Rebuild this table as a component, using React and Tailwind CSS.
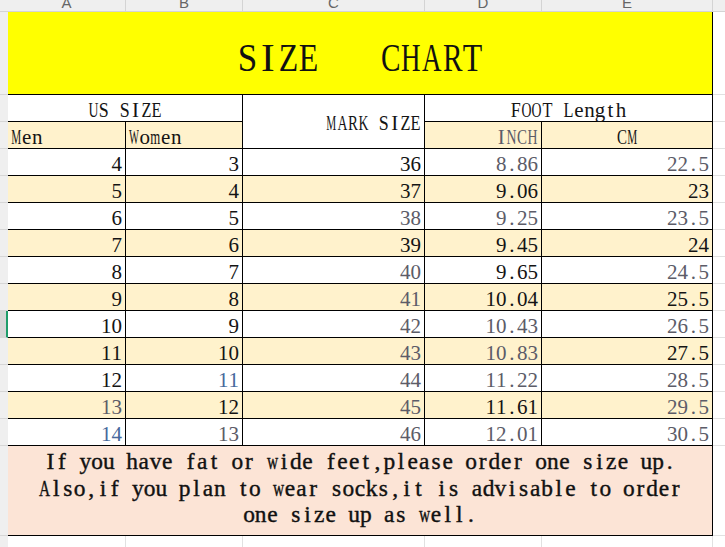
import React from 'react';

// Liberation Serif advance widths (per 1000 em) for glyphs wider than a half-width cell
const GW = {
  A: 722, B: 667, C: 667, D: 722, E: 611, F: 556, G: 722, H: 722, K: 722, L: 611,
  M: 889, N: 722, O: 722, P: 556, R: 667, S: 556, T: 611, U: 722, V: 722, W: 944, Z: 611,
  m: 778, w: 722,
};

// SimSun-like fixed pitch: every glyph sits in a half-em cell
function Mono({ text }) {
  return (
    <span className="whitespace-nowrap">
      {text.split('').map((ch, i) => {
        const w = (GW[ch] || 500) / 1000;
        const s = w > 0.5 ? 0.475 / w : 1;
        return (
          <span key={i} className="inline-flex w-[0.5em] justify-center">
            <span
              className="inline-block whitespace-pre"
              style={s < 1 ? { transform: `scaleX(${s})` } : undefined}
            >
              {ch}
            </span>
          </span>
        );
      })}
    </span>
  );
}

const letters = [
  ['A', 'w-[118px]'],
  ['B', 'w-[117px]'],
  ['C', 'w-[182px]'],
  ['D', 'w-[117px]'],
  ['E', 'w-[171px]'],
];

const tone = {
  d: 'text-[#141414]',
  g: 'text-[#5c5c68]',
  b: 'text-[#46689c]',
};

const data = [
  [['4', '3', '36', '8.86', '22.5'], 'dddgg'],
  [['5', '4', '37', '9.06', '23'], 'ddddd'],
  [['6', '5', '38', '9.25', '23.5'], 'ddggg'],
  [['7', '6', '39', '9.45', '24'], 'ddddd'],
  [['8', '7', '40', '9.65', '24.5'], 'ddgdg'],
  [['9', '8', '41', '10.04', '25.5'], 'ddgdd'],
  [['10', '9', '42', '10.43', '26.5'], 'ddggg'],
  [['11', '10', '43', '10.83', '27.5'], 'ddggd'],
  [['12', '11', '44', '11.22', '28.5'], 'dbggg'],
  [['13', '12', '45', '11.61', '29.5'], 'gdgdg'],
  [['14', '13', '46', '12.01', '30.5'], 'bgggg'],
];

const GRID = 'grid grid-cols-[118px_117px_182px_117px_171px]';
const CELL = 'flex items-end border-r border-b border-black';

function SideStrip({ active, light }) {
  const line = light ? 'border-b border-[#e1e1e1]' : 'border-b border-[#d6d6d6]';
  return (
    <>
      <div className={`h-[83px] ${line}`} />
      {Array.from({ length: 13 }).map((_, i) => (
        <div
          key={i}
          className={
            !light && i === active
              ? `h-[27px] ${line} bg-[#d6d6d6] border-r-2 border-r-[#1f9d6a]`
              : `h-[27px] ${line}`
          }
        />
      ))}
      <div className={`h-[90px] ${line}`} />
      <div className="flex-1" />
    </>
  );
}

export default function App() {
  return (
    <div className="w-[725px] h-[547px] overflow-hidden bg-white font-['Liberation_Serif',serif] text-[#141414]">
      {/* column letters, cut off at the top edge */}
      <div className="flex h-[12px] bg-[#efefef] border-b border-[#d4d4d4] font-['Liberation_Sans',sans-serif] text-[15px] leading-[15px] text-[#666666]">
        <div className="w-[8px]" />
        {letters.map(([l, w]) => (
          <div key={l} className={`${w} overflow-hidden border-r border-[#d4d4d4] text-center`}>
            <div className="-mt-[5px]">{l}</div>
          </div>
        ))}
        <div className="flex-1" />
      </div>

      <div className="flex h-[535px]">
        {/* row header strip */}
        <div className="w-[8px] flex flex-col bg-[#efefef]">
          <SideStrip active={8} />
        </div>

        {/* sheet */}
        <div className="w-[705px] flex flex-col">
          <div className="h-[83px] bg-[#ffff00] border-r border-b border-black flex items-end justify-center pb-[16px] text-[41px] leading-[41px] text-[#111111]">
            <Mono text="SIZE   CHART" />
          </div>

          <div className={`${GRID} grid-rows-[27px_27px] text-[21px] leading-[21px]`}>
            <div className={`${CELL} col-span-2 justify-center bg-white`}>
              <Mono text="US SIZE" />
            </div>
            <div className="row-span-2 flex items-center justify-end pr-[3px] pt-[3px] border-r border-b border-black bg-white">
              <Mono text="MARK SIZE" />
            </div>
            <div className={`${CELL} col-span-2 justify-center bg-white`}>
              <Mono text="FOOT Length" />
            </div>
            <div className={`${CELL} pl-[3px] bg-[#fff2cc]`}>
              <Mono text="Men" />
            </div>
            <div className={`${CELL} pl-[3px] bg-[#fff2cc]`}>
              <Mono text="Women" />
            </div>
            <div className={`${CELL} justify-end pr-[3px] bg-[#fff2cc] text-[#5c5c68]`}>
              <Mono text="INCH" />
            </div>
            <div className={`${CELL} justify-center bg-[#fff2cc]`}>
              <Mono text="CM" />
            </div>
          </div>

          {data.map(([vals, tones], r) => (
            <div
              key={r}
              className={`${GRID} h-[27px] text-[21px] leading-[21px] ${r % 2 ? 'bg-[#fff2cc]' : 'bg-white'}`}
            >
              {vals.map((v, c) => (
                <div key={c} className={`${CELL} justify-end pr-[3px] ${tone[tones[c]]}`}>
                  <Mono text={v} />
                </div>
              ))}
            </div>
          ))}

          <div className="h-[90px] bg-[#fce4d6] border-r border-b border-black flex flex-col items-center pt-[2px] text-[23.4px] leading-[26.5px] text-[#111111] [-webkit-text-stroke:0.4px_#111111]">
            <div><Mono text="If you have fat or wide feet,please order one size up." /></div>
            <div><Mono text="Also,if you plan to wear socks,it is advisable to order" /></div>
            <div><Mono text="one size up as well." /></div>
          </div>

          <div className={`${GRID} flex-1`}>
            {[0, 1, 2, 3, 4].map((i) => (
              <div key={i} className="border-r border-[#e1e1e1]" />
            ))}
          </div>
        </div>

        {/* empty columns to the right */}
        <div className="flex-1 flex flex-col bg-white">
          <SideStrip light />
        </div>
      </div>
    </div>
  );
}
